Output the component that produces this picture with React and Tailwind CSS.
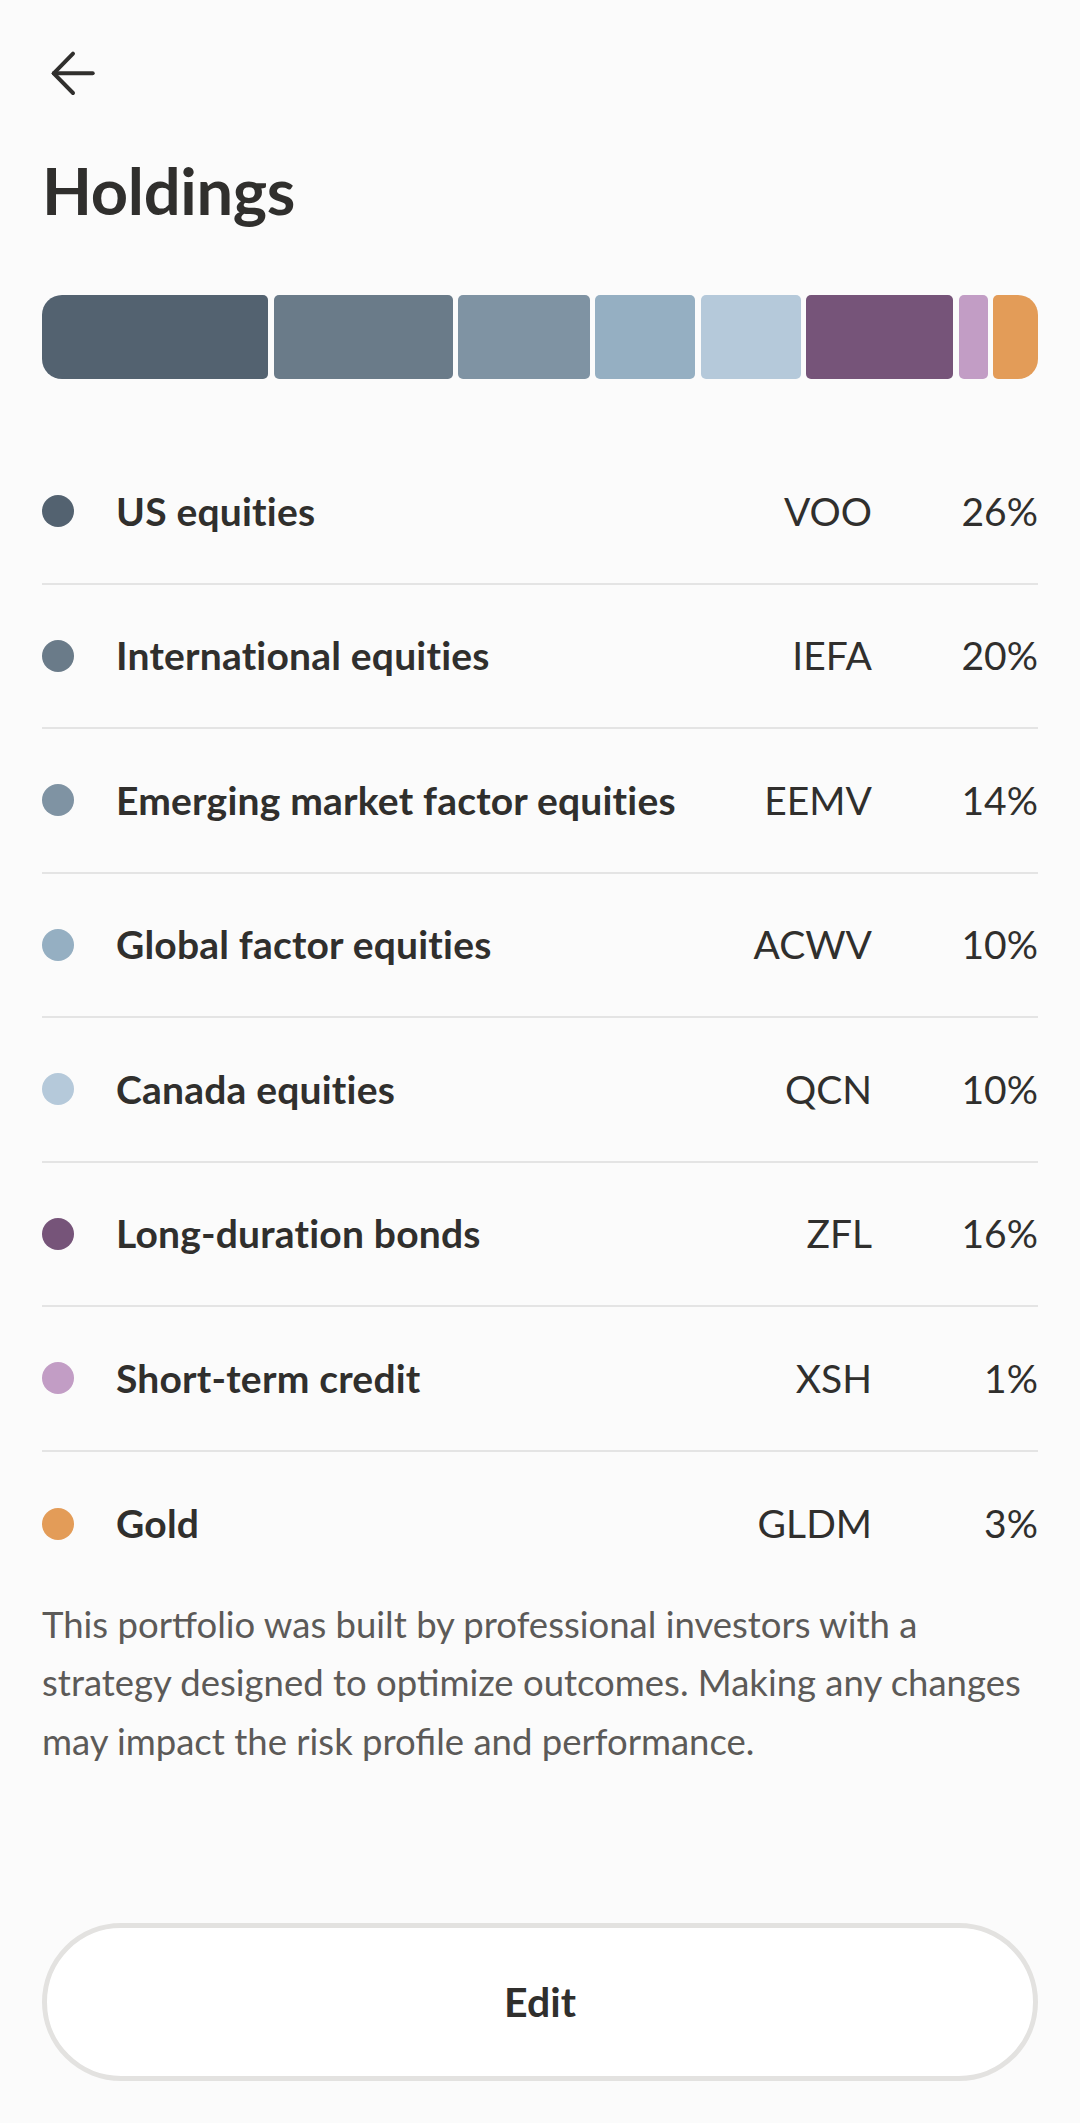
import React from "react";

const holdings = [
  { name: "US equities", ticker: "VOO", pct: "26%", dot: "bg-[#536270]" },
  { name: "International equities", ticker: "IEFA", pct: "20%", dot: "bg-[#6a7b89]" },
  { name: "Emerging market factor equities", ticker: "EEMV", pct: "14%", dot: "bg-[#7f93a3]" },
  { name: "Global factor equities", ticker: "ACWV", pct: "10%", dot: "bg-[#95afc2]" },
  { name: "Canada equities", ticker: "QCN", pct: "10%", dot: "bg-[#b5c9da]" },
  { name: "Long-duration bonds", ticker: "ZFL", pct: "16%", dot: "bg-[#765479]" },
  { name: "Short-term credit", ticker: "XSH", pct: "1%", dot: "bg-[#c29dc5]" },
  { name: "Gold", ticker: "GLDM", pct: "3%", dot: "bg-[#e39c58]" },
];

const segments = [
  "grow-[26] bg-[#536270] rounded-l-[20px] rounded-r-[5px]",
  "grow-[20] bg-[#6a7b89] rounded-[5px]",
  "grow-[14] bg-[#7f93a3] rounded-[5px]",
  "grow-[10] bg-[#95afc2] rounded-[5px]",
  "grow-[10] bg-[#b5c9da] rounded-[5px]",
  "grow-[16] bg-[#765479] rounded-[5px]",
  "grow-[1] bg-[#c29dc5] rounded-[5px]",
  "grow-[3] bg-[#e39c58] rounded-l-[5px] rounded-r-[20px]",
];

export default function App() {
  return (
    <div className="min-h-[2123px] w-[1080px] bg-[#fbfbfb] px-[42px] font-['Lato','Noto_Sans',sans-serif] text-[#302f2d]">
      <div className="pt-[49px] pl-[6px]">
        <svg width="48" height="48" viewBox="0 0 48 48" fill="none" stroke="#302f2d" strokeWidth="4" strokeLinecap="round" strokeLinejoin="round">
          <path d="M44.7 24.3H5.7" />
          <path d="M25 4.6L5.7 24.3L25 44" />
        </svg>
      </div>
      <h1 className="mt-[54px] text-[65px] leading-[1.2] font-bold tracking-[-0.3px]">Holdings</h1>
      <div className="mt-[66px] flex h-[84px] gap-[5.5px]">
        {segments.map((c, i) => (
          <div key={i} className={"basis-[21px] " + c} />
        ))}
      </div>
      <div className="mt-[61px]">
        {holdings.map((h, i) => (
          <div
            key={h.name}
            className={
              "flex h-[144.5px] items-center " +
              (i < holdings.length - 1 ? "border-b-[2px] border-[#e4e4e4]" : "")
            }
          >
            <div className={"h-[32px] w-[32px] shrink-0 rounded-full " + h.dot} />
            <div className="ml-[42px] flex-1 text-[39px] leading-[1.2] font-bold whitespace-nowrap tracking-[0.2px]">{h.name}</div>
            <div className="text-right text-[39px] leading-[1.2] font-normal">{h.ticker}</div>
            <div className="w-[166px] text-right text-[39px] leading-[1.2] font-normal">{h.pct}</div>
          </div>
        ))}
      </div>
      <p className="-mt-[1px] text-[36.5px] leading-[58.3px] text-[#5c5a58] font-normal">
        <span className="block whitespace-nowrap">This portfolio was built by professional investors with a</span>
        <span className="block whitespace-nowrap">strategy designed to optimize outcomes. Making any changes</span>
        <span className="block whitespace-nowrap">may impact the risk profile and performance.</span>
      </p>
      <button className="mt-[153px] flex h-[158px] w-full items-center justify-center rounded-full border-[5px] border-[#e3e2e0] bg-white text-[41px] font-bold text-[#302f2d]">
        Edit
      </button>
    </div>
  );
}
